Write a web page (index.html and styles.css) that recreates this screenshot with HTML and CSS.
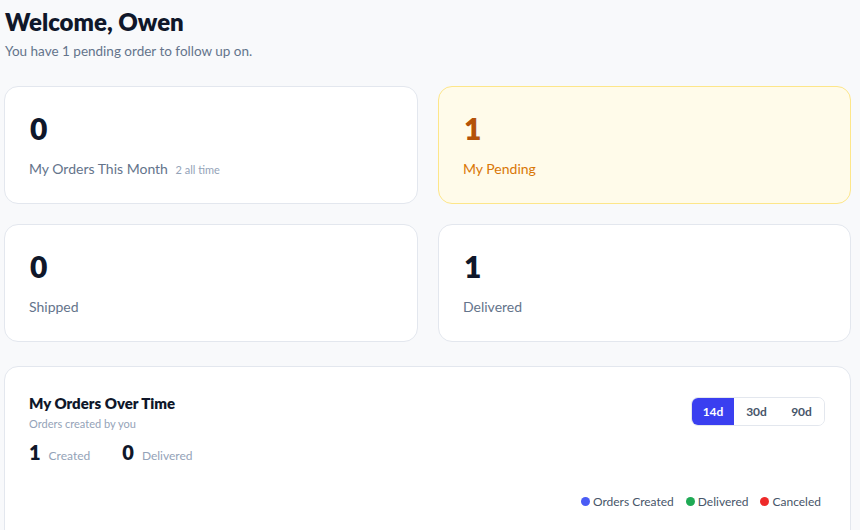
FILE: index.html
```html
<!DOCTYPE html>
<html>
<head>
<meta charset="utf-8">
<link rel="stylesheet" href="styles.css">
</head>
<body>
<div class="page">
  <header class="head">
    <h1 class="title">Welcome, Owen</h1>
    <p class="sub">You have 1 pending order to follow up on.</p>
  </header>
  <section class="grid">
    <div class="card">
      <div class="num">0</div>
      <div class="label">My Orders This Month <span class="extra">2 all time</span></div>
    </div>
    <div class="card pending">
      <div class="num">1</div>
      <div class="label">My Pending</div>
    </div>
    <div class="card">
      <div class="num">0</div>
      <div class="label">Shipped</div>
    </div>
    <div class="card">
      <div class="num">1</div>
      <div class="label">Delivered</div>
    </div>
  </section>
  <section class="chart">
    <div class="chart-top">
      <div>
        <h2 class="chart-title">My Orders Over Time</h2>
        <p class="chart-sub">Orders created by you</p>
        <div class="stats">
          <div class="stat"><span class="stat-num">1</span><span class="stat-label">Created</span></div>
          <div class="stat"><span class="stat-num">0</span><span class="stat-label">Delivered</span></div>
        </div>
      </div>
      <div class="toggle">
        <button class="seg active">14d</button>
        <button class="seg">30d</button>
        <button class="seg">90d</button>
      </div>
    </div>
    <div class="legend">
      <span class="item"><span class="dot blue"></span>Orders Created</span>
      <span class="item"><span class="dot green"></span>Delivered</span>
      <span class="item"><span class="dot red"></span>Canceled</span>
    </div>
  </section>
</div>
</body>
</html>
```
FILE: styles.css
```css
* { box-sizing: border-box; }
html, body { margin: 0; padding: 0; }
body {
  background: #f8f9fb;
  font-family: Lato, "Noto Sans", sans-serif;
  color: #0f172a;
  overflow: hidden;
}
.page {
  width: 847px;
  margin-left: 4px;
  padding-top: 7px;
}
.head { padding-left: 1px; }
.title {
  margin: 0;
  font-size: 24px;
  line-height: 30px;
  font-weight: 800;
  color: #0f172a;
}
.sub {
  margin: 5px 0 0;
  font-size: 13.5px;
  line-height: 18px;
  color: #64748b;
}
.grid {
  margin-top: 26px;
  display: grid;
  grid-template-columns: 414px 413px;
  column-gap: 20px;
  row-gap: 20px;
}
.card {
  height: 118px;
  background: #fff;
  border: 1px solid #e3e7ee;
  border-radius: 14px;
  padding: 23px 24px 0;
}
.num {
  font-size: 30px;
  line-height: 36px;
  font-weight: 800;
  color: #0f172a;
  margin-left: 1px;
}
.label {
  margin-top: 13px;
  font-size: 14px;
  line-height: 20px;
  color: #64748b;
}
.extra {
  margin-left: 4px;
  font-size: 11px;
  color: #94a3b8;
}
.pending {
  background: #fffbea;
  border-color: #fde68a;
}
.pending .num { color: #b45309; }
.pending .label { color: #d97706; }
.chart {
  margin-top: 24px;
  height: 300px;
  background: #fff;
  border: 1px solid #e3e7ee;
  border-radius: 14px;
  padding: 26px 25px 0 24px;
}
.chart-top {
  display: flex;
  justify-content: space-between;
  align-items: flex-start;
}
.chart-title {
  margin: 0;
  font-size: 15px;
  line-height: 20px;
  font-weight: 800;
  color: #0f172a;
}
.chart-sub {
  margin: 3px 0 0;
  font-size: 11px;
  line-height: 16px;
  color: #94a3b8;
}
.stats {
  margin-top: 7px;
  display: flex;
  gap: 32px;
}
.stat {
  display: flex;
  align-items: baseline;
  gap: 8px;
}
.stat-num {
  font-size: 20px;
  line-height: 26px;
  font-weight: 800;
  color: #0f172a;
}
.stat-label {
  font-size: 12px;
  color: #94a3b8;
}
.toggle {
  margin-top: 4px;
  display: flex;
  border: 1px solid #e3e7ee;
  border-radius: 7px;
  overflow: hidden;
}
.seg {
  border: 0;
  background: #fff;
  font-family: inherit;
  font-size: 12px;
  font-weight: 700;
  color: #475569;
  height: 27px;
  padding: 0;
  width: 45px;
}
.seg.active {
  background: #3a3ff0;
  color: #fff;
  width: 42px;
}
.legend {
  margin-top: 29px;
  display: flex;
  justify-content: flex-end;
  gap: 12px;
  padding-right: 4px;
}
.item {
  display: flex;
  align-items: center;
  gap: 3px;
  font-size: 12px;
  color: #475569;
}
.dot {
  width: 9px;
  height: 9px;
  border-radius: 50%;
  display: inline-block;
}
.blue { background: #4a5cf5; }
.green { background: #1faa55; }
.red { background: #ee2a2a; }
```
